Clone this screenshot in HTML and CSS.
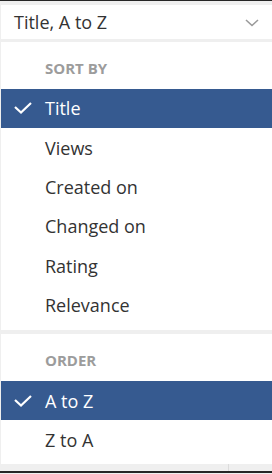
FILE: index.html
```html
<!DOCTYPE html>
<html lang="en">
<head>
    <meta charset="UTF-8">
    <meta name="viewport" content="width=device-width, initial-scale=1.0">
    <title>Sort</title>
    <link rel="stylesheet" href="styles.css">
</head>
<body>

    <div class="select">
        <span class="select-value">Title, A to Z</span>
        <svg class="chevron" width="14" height="8" viewBox="0 0 14 8">
            <polyline points="1,1 7,6.5 13,1" fill="none" stroke="#9a9a9a" stroke-width="1.6"/>
        </svg>
    </div>

    <div class="menu">
        <div class="group">
            <div class="group-title">Sort by</div>
            <div class="item active">
                <span class="check">
                    <svg width="18" height="12" viewBox="0 0 18 12">
                        <polyline points="1,5 7,10.5 17,1" fill="none" stroke="#fff" stroke-width="2.2"/>
                    </svg>
                </span>
                Title
            </div>
            <div class="item"><span class="check"></span>Views</div>
            <div class="item"><span class="check"></span>Created on</div>
            <div class="item"><span class="check"></span>Changed on</div>
            <div class="item"><span class="check"></span>Rating</div>
            <div class="item"><span class="check"></span>Relevance</div>
        </div>
        <div class="group">
            <div class="group-title">Order</div>
            <div class="item active">
                <span class="check">
                    <svg width="18" height="12" viewBox="0 0 18 12">
                        <polyline points="1,5 7,10.5 17,1" fill="none" stroke="#fff" stroke-width="2.2"/>
                    </svg>
                </span>
                A to Z
            </div>
            <div class="item"><span class="check"></span>Z to A</div>
        </div>
    </div>

    <div class="footer">
        <div class="footer-cell"></div>
    </div>

</body>
</html>
```

FILE: styles.css
```css
body {
    font-family: 'Open Sans', 'Noto Sans', sans-serif;
    margin: 0;
    height: 474px;
    box-sizing: border-box;
    overflow: hidden;
    background-color: #efefef;
    border-top: 1px solid #262626;
    color: #333333;
}

.select {
    display: flex;
    align-items: center;
    justify-content: space-between;
    height: 34px;
    margin: 4px 0 0 1px;
    padding: 0 13px 0 13px;
    background-color: #ffffff;
    font-size: 18px;
}

.chevron {
    display: block;
    margin-top: 1px;
}

.menu {
    margin: 3px 0 0 1px;
    background-color: #ffffff;
}

.group {
    padding-bottom: 5.6px;
}

.group + .group {
    border-top: 4px solid #efefef;
    padding-bottom: 4.7px;
}

.group-title {
    padding: 13.5px 0 9px 44px;
    line-height: 24px;
    font-size: 15px;
    font-weight: 700;
    color: #9c9c9c;
    text-transform: uppercase;
}

.item {
    display: flex;
    align-items: center;
    height: 39.4px;
    font-size: 18px;
}

.item.active {
    background-color: #365a90;
    color: #ffffff;
}

.check {
    width: 44px;
    display: flex;
    align-items: center;
}

.check svg {
    display: block;
    margin-left: 13px;
}

.footer {
    height: 7px;
    border-bottom: 2px solid #262626;
}

.footer-cell {
    width: 228px;
    height: 100%;
    border-right: 1px solid #dcdcdc;
}
```
